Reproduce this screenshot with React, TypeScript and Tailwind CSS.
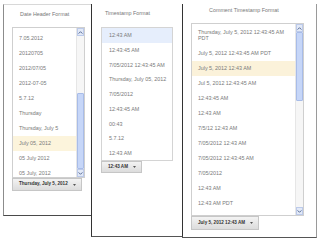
import React from "react";

type Item = { label: React.ReactNode; selected?: boolean; tall?: boolean };

const dateHeader: Item[] = [
  { label: "7.05.2012" },
  { label: "20120705" },
  { label: "2012/07/05" },
  { label: "2012-07-05" },
  { label: "5.7.12" },
  { label: "Thursday" },
  { label: "Thursday, July 5" },
  { label: "July 05, 2012", selected: true },
  { label: "05 July 2012" },
  { label: "05 July, 2012" },
];

const timestamp: Item[] = [
  { label: "12:43 AM", selected: true },
  { label: "12:43:45 AM" },
  { label: "7/05/2012 12:43:45 AM" },
  { label: "Thursday, July 05, 2012" },
  { label: "7/05/2012" },
  { label: "12:43:45 AM" },
  { label: "00:43" },
  { label: "5.7.12" },
  { label: "12:43 AM" },
];

const comment: Item[] = [
  {
    label: (
      <>
        Thursday, July 5, 2012 12:43:45 AM
        <br />
        PDT
      </>
    ),
    tall: true,
  },
  { label: "July 5, 2012 12:43:45 AM PDT" },
  { label: "July 5, 2012 12:43 AM", selected: true },
  { label: "Jul 5, 2012 12:43:45 AM" },
  { label: "12:43:45 AM" },
  { label: "12:43 AM" },
  { label: "7/5/12 12:43 AM" },
  { label: "7/05/2012 12:43 AM" },
  { label: "7/05/2012 12:43:45 AM" },
  { label: "7/05/2012" },
  { label: "12:43 AM" },
  { label: "12:43 AM PDT" },
];

const Chevron = ({ down }: { down?: boolean }) => (
  <svg width="5" height="3" viewBox="0 0 5 3" className={down ? "rotate-180" : ""}>
    <path d="M0.6 2.6 L2.5 0.7 L4.4 2.6" fill="none" stroke="#4a5f8c" strokeWidth="0.9" />
  </svg>
);

const ArrowBox = ({ down }: { down?: boolean }) => (
  <div className="flex h-[8px] shrink-0 items-center justify-center border border-[#bccaea] bg-[#e2e9f7]">
    <Chevron down={down} />
  </div>
);

const ScrollBar = ({ gapTop, thumb }: { gapTop: string; thumb: string }) => (
  <div className="flex w-[8px] shrink-0 flex-col border-l border-[#e6e6e6] bg-[#f6f6f6]">
    <ArrowBox />
    <div className={gapTop} />
    <div className={`${thumb} shrink-0 rounded-[1px] border border-[#a8bce8] bg-[#c6d6f8]`} />
    <div className="flex-1" />
    <ArrowBox down />
  </div>
);

const Row = ({ item, hl, pad }: { item: Item; hl: string; pad: string }) => {
  const base = item.tall ? "py-[5px] leading-[6px]" : "h-[15px] leading-[15px]";
  return (
    <div className={`${base} ${pad} whitespace-nowrap ${item.selected ? hl : ""}`}>{item.label}</div>
  );
};

const DropButton = ({ label, size }: { label: string; size: string }) => (
  <div
    className={`flex w-fit items-center border border-[#c6c6c6] bg-linear-to-b from-[#f3f3f3] to-[#dcdcdc] pl-[6px] pr-[5px] ${size}`}
  >
    <span className="text-[4.6px] font-bold leading-none text-[#333]">{label}</span>
    <svg width="3" height="2" viewBox="0 0 3 2" className="ml-[5px]">
      <path d="M0 0 L3 0 L1.5 2 Z" fill="#555" />
    </svg>
  </div>
);

export default function App() {
  return (
    <div className="flex h-[241px] w-[320px] items-start bg-white pl-[3px] pt-[4px] font-['Liberation_Sans',Arial,sans-serif] text-[5.4px] text-[#7a7a7a]">
      {/* Date header */}
      <div className="flex h-[212px] w-[89px] shrink-0 flex-col border border-b-[#4a4a4a] border-l-[#8c8c8c] border-r-[#333] border-t-[#d8d8d8] pl-[8px]">
        <div className="pl-[8px] pt-[4px] leading-[10px] text-[#777]">Date Header Format</div>
        <div className="mt-[8px] flex h-[151px] w-[73px] border border-[#cfcfcf] bg-white">
          <div className="min-w-0 flex-1 overflow-hidden pt-[3px]">
            {dateHeader.map((it, i) => (
              <Row key={i} item={it} hl="bg-[#fcf4dc]" pad="pl-[6px]" />
            ))}
          </div>
          <ScrollBar gapTop="h-[57px]" thumb="h-[76px]" />
        </div>
        <DropButton label="Thursday, July 5, 2012" size="h-[13px]" />
      </div>

      {/* Timestamp */}
      <div className="-ml-px flex h-[233px] w-[92px] shrink-0 flex-col border-x border-b border-x-[#333] border-b-[#555] pl-[9px]">
        <div className="pl-[4px] pt-[4px] leading-[10px] text-[#777]">Timestamp Format</div>
        <div className="mt-[9px] h-[134px] w-[72px] overflow-hidden border border-[#d4d4d4] bg-white">
          {timestamp.map((it, i) => (
            <div
              key={i}
              className={`h-[14.75px] whitespace-nowrap pl-[7px] leading-[14.75px] ${it.selected ? "bg-[#e6eefc]" : ""}`}
            >
              {it.label}
            </div>
          ))}
        </div>
        <DropButton label="12:43 AM" size="h-[12px]" />
      </div>

      {/* Comment timestamp */}
      <div className="-ml-px flex h-[234px] w-[135px] shrink-0 flex-col border-b border-r border-b-[#555] border-r-[#9a9a9a] pl-[9px]">
        <div className="pl-[18px] pt-[1px] leading-[10px] text-[#777]">Comment Timestamp Format</div>
        <div className="mt-[8px] flex h-[193px] w-[113px] border border-[#cfcfcf] bg-white">
          <div className="min-w-0 flex-1 overflow-hidden">
            {comment.map((it, i) => (
              <Row key={i} item={it} hl="bg-[#fbf2da]" pad="pl-[6px]" />
            ))}
          </div>
          <ScrollBar gapTop="h-0" thumb="h-[69px]" />
        </div>
        <DropButton label="July 5, 2012 12:43 AM" size="h-[14px]" />
      </div>
    </div>
  );
}
